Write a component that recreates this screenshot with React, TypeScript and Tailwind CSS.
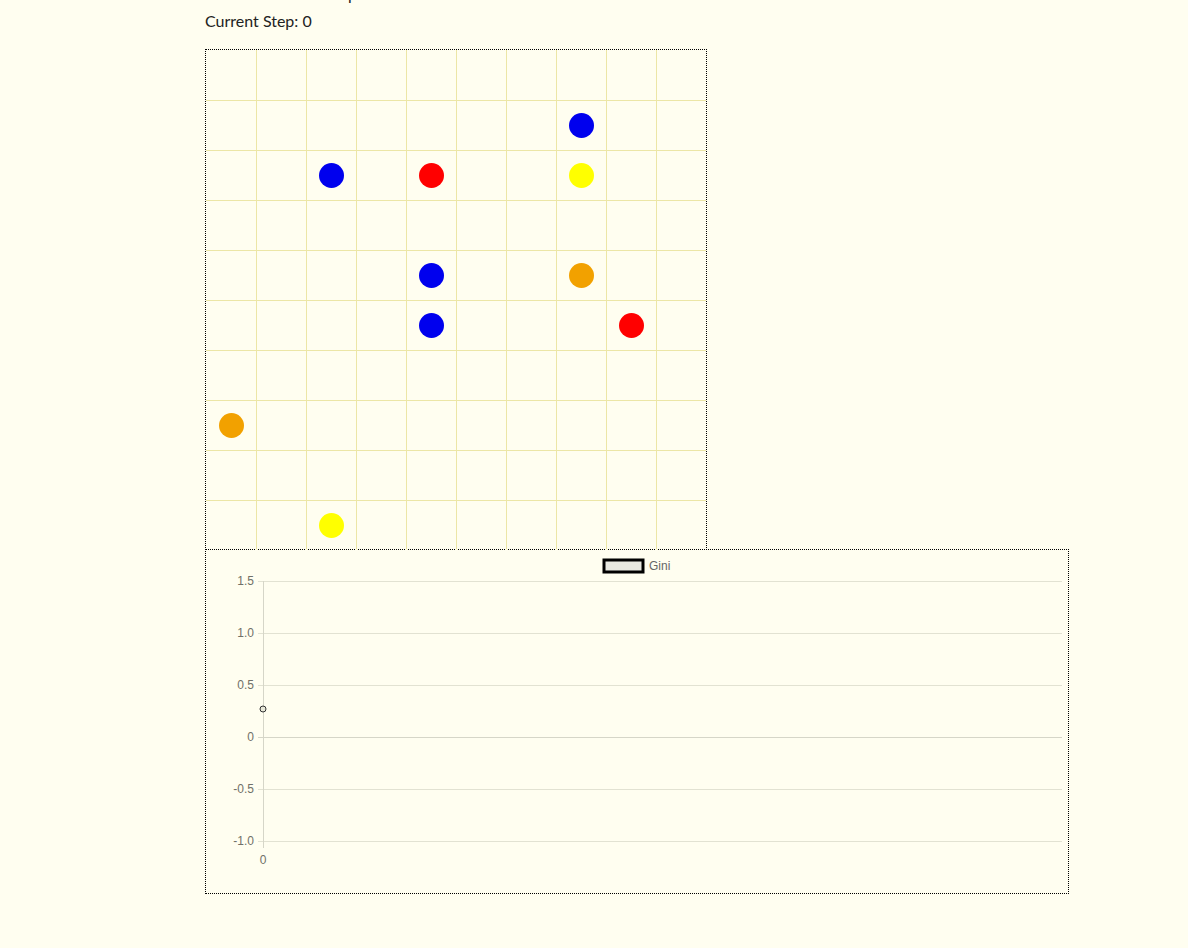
const agents: { col: number; row: number; color: string }[] = [
  { col: 7, row: 1, color: 'bg-[#0000ee]' },
  { col: 2, row: 2, color: 'bg-[#0000ee]' },
  { col: 4, row: 2, color: 'bg-[#ff0000]' },
  { col: 7, row: 2, color: 'bg-[#ffff00]' },
  { col: 4, row: 4, color: 'bg-[#0000ee]' },
  { col: 7, row: 4, color: 'bg-[#f2a100]' },
  { col: 4, row: 5, color: 'bg-[#0000ee]' },
  { col: 8, row: 5, color: 'bg-[#ff0000]' },
  { col: 0, row: 7, color: 'bg-[#f2a100]' },
  { col: 2, row: 9, color: 'bg-[#ffff00]' },
];

function GridCanvas() {
  const cells = [];
  for (let r = 0; r < 10; r++) {
    for (let c = 0; c < 10; c++) {
      const agent = agents.find((a) => a.col === c && a.row === r);
      cells.push(
        <div
          key={`${r}-${c}`}
          className={`flex items-center justify-center border-[#ece6a6] ${c > 0 ? 'border-l' : ''} ${r > 0 ? 'border-t' : ''}`}
        >
          {agent && <div className={`w-[25px] h-[25px] rounded-full ${agent.color}`} />}
        </div>
      );
    }
  }
  return (
    <div className="w-[502px] h-[501px] border border-dotted border-black">
      <div className="grid grid-cols-[repeat(10,50px)] grid-rows-[repeat(10,50px)]">{cells}</div>
    </div>
  );
}

function GiniChart() {
  const ticks = [1.5, 1.0, 0.5, 0, -0.5, -1.0];
  return (
    <div className="w-[864px] h-[345px] border border-dotted border-black -mt-px">
      <svg width="862" height="343" className="block" fontFamily="'Liberation Sans', Arial, sans-serif" fontSize="12">
        {/* legend */}
        <rect x="398" y="10" width="39" height="12" fill="#e8e8e0" stroke="#000" strokeWidth="3" />
        <text x="443" y="20" fill="#666">Gini</text>
        {/* grid */}
        {ticks.map((t, i) => {
          const y = 31 + i * 52;
          return (
            <g key={t}>
              <line x1="52" x2="856" y1={y + 0.5} y2={y + 0.5} stroke={t === 0 ? '#d6d6c8' : '#e2e2d2'} strokeWidth="1" />
              <text x="48" y={y + 4} textAnchor="end" fill="#707068">
                {t === 0 ? '0' : t.toFixed(1)}
              </text>
            </g>
          );
        })}
        <line x1="57.5" x2="57.5" y1="31" y2="298" stroke="#d6d6c8" strokeWidth="1" />
        <text x="57" y="314" textAnchor="middle" fill="#707068">0</text>
        <circle cx="57" cy="159" r="3" fill="#e8e8d8" stroke="#333" strokeWidth="1" />
      </svg>
    </div>
  );
}

export default function App() {
  return (
    <div className="min-h-[948px] w-full bg-[#fffef0] pl-[205px] text-[#222] font-['Lato','Open_Sans',sans-serif] text-base">
      {/* previous line, scrolled off the top */}
      <div className="flex items-end h-[6px] overflow-hidden leading-6">
        <span className="w-[152px] text-right">Step</span>
        <span className="w-[191px]" />
        <span>20</span>
      </div>
      <div className="mt-[3px] leading-6">Current Step: 0</div>
      <div className="mt-[16px]">
        <GridCanvas />
        <GiniChart />
      </div>
    </div>
  );
}
